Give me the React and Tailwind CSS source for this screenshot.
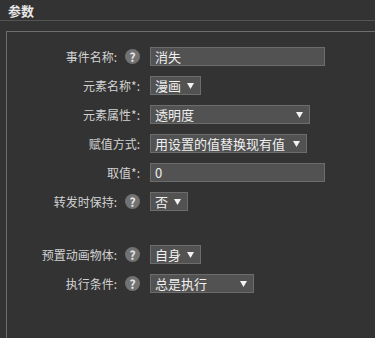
import React from "react";

const font = { fontFamily: '"Noto Sans CJK SC", "Noto Sans", sans-serif' };

function Help() {
  return (
    <span className="flex h-[15px] w-[15px] items-center justify-center rounded-full bg-[#727272] text-[12px] font-bold leading-none text-[#e6e6e6]">
      ?
    </span>
  );
}

function Arrow() {
  return (
    <svg width="7" height="6" viewBox="0 0 7 6" className="shrink-0">
      <path d="M0 0H7L3.5 6Z" fill="#f2f2f2" />
    </svg>
  );
}

function Field({ label, help, children, className = "" }) {
  return (
    <div className={"flex h-[19px] items-center " + className}>
      <div className="flex w-[133px] items-center justify-end gap-2">
        <span className="text-[12px] leading-none text-[#d2d2d2]">{label}</span>
        {help && <Help />}
      </div>
      <div className="ml-[10px] flex h-full items-center">{children}</div>
    </div>
  );
}

function TextBox({ value }) {
  return (
    <div className="flex h-[19px] w-[175px] items-center border border-[#6c6c6c] bg-[#525252] pl-[4px] text-[13px] leading-none text-[#f0f0f0]">
      {value}
    </div>
  );
}

function Select({ value, width }) {
  return (
    <div
      className={
        "flex h-[19px] items-center justify-between border border-[#6c6c6c] bg-[#525252] pl-[4px] pr-[6px] text-[13px] leading-none text-[#f0f0f0] " +
        width
      }
    >
      <span className="whitespace-nowrap">{value}</span>
      <Arrow />
    </div>
  );
}

export default function App() {
  return (
    <div className="h-[338px] w-[375px] overflow-hidden bg-[#333333]" style={font}>
      <div className="flex h-[21px] items-center border-b border-[#555555] pl-[8px]">
        <span className="text-[13px] font-bold leading-none text-[#e8e8e8]">参数</span>
      </div>
      <div className="ml-[6px] mt-[10px] h-[340px] w-[400px] border border-[#6e6e6e] pt-[15px]">
        <div className="flex flex-col gap-[10px]">
          <Field label="事件名称:" help>
            <TextBox value="消失" />
          </Field>
          <Field label="元素名称*:">
            <Select value="漫画" width="w-[51px]" />
          </Field>
          <Field label="元素属性*:">
            <Select value="透明度" width="w-[160px]" />
          </Field>
          <Field label="赋值方式:">
            <Select value="用设置的值替换现有值" width="w-[157px]" />
          </Field>
          <Field label="取值*:">
            <TextBox value="0" />
          </Field>
          <Field label="转发时保持:" help>
            <Select value="否" width="w-[38px]" />
          </Field>
          <Field label="预置动画物体:" help className="mt-[24px]">
            <Select value="自身" width="w-[51px]" />
          </Field>
          <Field label="执行条件:" help>
            <Select value="总是执行" width="w-[104px]" />
          </Field>
        </div>
      </div>
    </div>
  );
}
